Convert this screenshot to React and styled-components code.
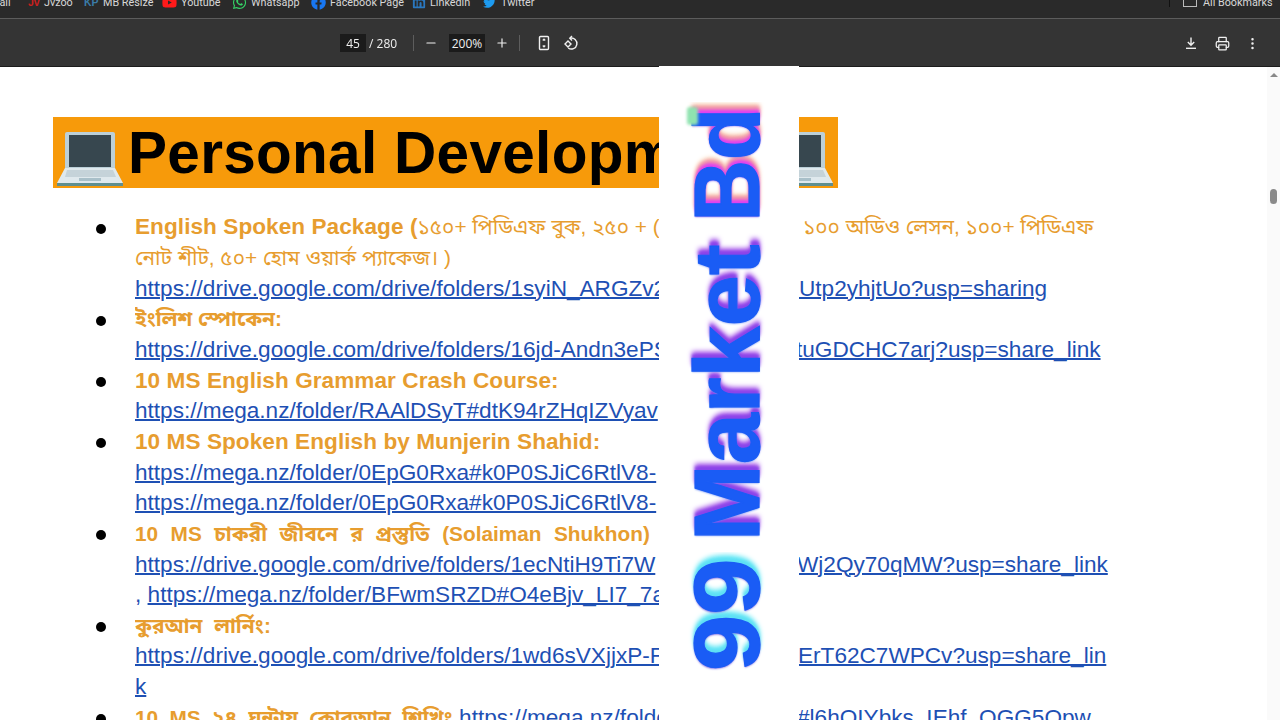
import React from "react";
import styled, { createGlobalStyle } from "styled-components";
import { FaYoutube, FaWhatsapp, FaFacebook, FaLinkedin, FaTwitter } from "react-icons/fa";
import { Minus, Plus, Printer, EllipsisVertical } from "lucide-react";

const Global = createGlobalStyle`
  html, body { margin: 0; padding: 0; background: #fff; overflow: hidden; }
  body { font-family: "Liberation Sans", "Noto Sans", sans-serif; }
`;
const Shell = styled.div`
  position: relative; width: 1280px; height: 720px; overflow: hidden;
  display: flex; flex-direction: column; filter: blur(0.4px);
`;
const BookmarkBar = styled.div`
  height: 19px; flex: none; background: #2a2a2a; display: flex; align-items: flex-start;
  overflow: hidden; color: #d8d8d8; font: 10.8px Roboto, sans-serif;
  border-bottom: 1px solid #5c5c5c; box-sizing: border-box;
`;
const Bookmark = styled.div`
  display: flex; align-items: center; height: 20px; flex: none; margin-top: -8px;
  width: ${p => p.$w}px; white-space: nowrap;
`;
const MailLabel = styled.span` margin-left: -10px; `;
const BmIcon = styled.span`
  display: inline-flex; flex: none; width: ${p => p.$w ?? 19}px; color: ${p => p.$c};
  font: bold 10.5px "Liberation Sans", sans-serif;
`;
const BmSeparator = styled.span`
  width: 1px; height: 9px; background: #111; margin-right: 13px; flex: none;
`;
const FolderBox = styled.span`
  width: 12px; height: 9px; border: 1px solid #bbb; flex: none; display: block; margin-right: 6px; margin-top: -2px;
`;
const Toolbar = styled.div`
  height: 47px; flex: none; background: #343434; display: flex; align-items: center; color: #f0f0f0;
  font: 12px "Open Sans", sans-serif; box-sizing: border-box; padding: 1px 0 0 340px;
  box-shadow: 0 1px 0 #1c1c1c; z-index: 1;
`;
const NumBox = styled.div`
  width: ${p => p.$w}px; height: 18px; background: #1b1b1b; display: flex; align-items: center; justify-content: center;
  flex: none; margin-left: ${p => p.$ml ?? 0}px;
`;
const Total = styled.span` margin-left: 3px; width: 30px; flex: none; white-space: nowrap; `;
const ToolSep = styled.span`
  width: 1px; height: 16px; background: #5d5d5d; flex: none; margin-left: ${p => p.$ml}px;
`;
const ToolIcon = styled.span`
  display: flex; width: 16px; height: 16px; align-items: center; justify-content: center; flex: none;
  margin-left: ${p => p.$ml}px; color: #f0f0f0;
`;
const Page = styled.main`
  flex: 1; background: #fff; padding-top: 51.3px; overflow: hidden; position: relative; min-height: 0;
`;
const Banner = styled.div`
  display: grid; grid-template-columns: 606px 140px 39px; height: 71px; margin-left: 53px; margin-bottom: 24px;
`;
const BannerBand = styled.div`
  background: #f79a0a; display: flex; align-items: center; overflow: hidden; white-space: nowrap; position: relative;
`;
const BannerTitle = styled.h1`
  margin: 0 0 0 75px; font: bold 58.5px/71px "Liberation Sans", sans-serif; color: #000; flex: none; letter-spacing: 0.3px;
`;
const LaptopWrap = styled.span`
  position: absolute; top: 15px; left: ${p => p.$x}px; display: block; line-height: 0;
`;
const Line = styled.div`
  display: grid; grid-template-columns: 135px 524px 140px auto; height: 30.67px; line-height: 30.67px;
  font-size: 22.6px; white-space: nowrap;
`;
const BulletCell = styled.div` display: flex; align-items: center; padding-left: 96px; padding-top: 2px; `;
const Bullet = styled.span` width: 10px; height: 10px; border-radius: 50%; background: #000; display: block; `;
const Cell = styled.div`
  overflow: hidden; color: #1e50b4; text-indent: ${p => p.$indent ?? 0}px;
`;
const Head = styled.span` color: #e79d2f; font-weight: bold; letter-spacing: 0.05px; `;
const Bn = styled.span`
  color: #e79d2f; font-family: "Liberation Sans", "Noto Sans Bengali", "Noto Sans", sans-serif;
  font-weight: ${p => p.$bold ? 700 : 400}; font-size: ${p => p.$fs ?? 20.8}px;
  word-spacing: ${p => p.$ws ?? 0}px;
`;
const Url = styled.span` color: #1e50b4; text-decoration: underline; text-decoration-thickness: 1.5px; `;
const Strip = styled.div`
  position: absolute; left: 659px; top: 66px; bottom: 0; width: 140px; background: #fff;
  display: flex; justify-content: center; z-index: 2;
`;
const Watermark = styled.div`
  writing-mode: vertical-rl; transform: rotate(180deg); height: 565px; margin-top: 39px; margin-left: -5px;
  font: bold 92px/92px "Liberation Sans", sans-serif; color: #1a5cf5; white-space: nowrap;
  display: flex; justify-content: flex-start; width: 92px;
  -webkit-text-stroke: 1.2px #1a5cf5;
`;
const Word = styled.span`
  display: block; flex: none; text-shadow: ${p => p.$shadow};
  margin-inline-start: ${p => p.$ms}px;
  transform: scaleY(${p => p.$stretch});
`;
const Smudge = styled.span`
  position: absolute; left: 28px; top: 41px; width: 11px; height: 18px; border-radius: 3px;
  background: #8fe3b0; filter: blur(1.5px); z-index: 1;
`;
const Track = styled.div`
  position: absolute; right: 0; top: 67px; bottom: 0; width: 13px; background: #fafafa; z-index: 3;
  display: flex; flex-direction: column; align-items: center; padding-top: 6px; box-sizing: border-box;
`;
const Arrow = styled.span`
  width: 0; height: 0; border-left: 4px solid transparent; border-right: 4px solid transparent;
  border-bottom: 4px solid #888; display: block;
`;
const Thumb = styled.span`
  width: 7px; height: 15px; border-radius: 4px; background: #8a8a8a; margin-top: 112px; display: block;
`;

const Laptop = () => (
  <svg width="66" height="54" viewBox="0 0 66 54">
    <path d="M10 0h46a2 2 0 0 1 2 2v36H8V2a2 2 0 0 1 2-2z" fill="#bcd0d8" />
    <rect x="12" y="3" width="42" height="32" fill="#37474f" />
    <path d="M8 36h50l8 15H0z" fill="#dfe9ed" />
    <path d="M10 38h46l3 7H8z" fill="#c5d3d9" />
    <rect x="22" y="46" width="22" height="3" fill="#a9c0c9" />
    <rect x="0" y="51" width="66" height="3" fill="#5e8f8f" />
  </svg>
);
const Fit = () => (
  <svg width="14" height="16" viewBox="0 0 14 16" fill="none" stroke="currentColor" strokeWidth="1.4">
    <rect x="2.5" y="1.5" width="9" height="13" rx="1" />
    <path d="M5.8 5.5 7 4.3l1.2 1.2M5.8 10.5 7 11.7l1.2-1.2" />
  </svg>
);
const Rotate = () => (
  <svg width="16" height="16" viewBox="0 0 16 16" fill="none" stroke="currentColor" strokeWidth="1.4">
    <path d="M6 3.2A5.5 5.5 0 1 1 4.2 13" />
    <path d="M8 1 5.8 3.2 8 5.4" />
    <path d="M4 6 1 9l3 3 3-3z" />
  </svg>
);
const Save = () => (
  <svg width="14" height="14" viewBox="0 0 14 14" fill="none" stroke="currentColor" strokeWidth="1.4">
    <path d="M7 1.5v7.5M3.8 6 7 9.2 10.2 6" />
    <path d="M2 12.3h10" />
  </svg>
);

const rows = [
  { left: <><Head>English Spoken Package (</Head><Bn>১৫০+ পিডিএফ বুক, ২৫০ + (</Bn></>, right: <Bn>১০০ অডিও লেসন, ১০০+ পিডিএফ</Bn>, indent: 4, bullet: true },
  { left: <Bn>নোট শীট, ৫০+ হোম ওয়ার্ক প্যাকেজ। )</Bn> },
  { left: <Url>https://drive.google.com/drive/folders/1syiN_ARGZv2</Url>, right: <Url>Utp2yhjtUo?usp=sharing</Url> },
  { left: <Bn $bold>ইংলিশ স্পোকেন:</Bn>, bullet: true },
  { left: <Url>https://drive.google.com/drive/folders/16jd-Andn3ePS</Url>, right: <Url>tuGDCHC7arj?usp=share_link</Url>, indent: -3 },
  { left: <Head>10 MS English Grammar Crash Course:</Head>, bullet: true },
  { left: <Url>https://mega.nz/folder/RAAlDSyT#dtK94rZHqIZVyav</Url> },
  { left: <Head>10 MS Spoken English by Munjerin Shahid:</Head>, bullet: true },
  { left: <Url>https://mega.nz/folder/0EpG0Rxa#k0P0SJiC6RtlV8-</Url> },
  { left: <Url>https://mega.nz/folder/0EpG0Rxa#k0P0SJiC6RtlV8-</Url> },
  { left: <Bn $bold $ws={6.7}>10 MS চাকরী জীবনে র প্রস্তুতি (Solaiman Shukhon)</Bn>, bullet: true },
  { left: <Url>https://drive.google.com/drive/folders/1ecNtiH9Ti7W</Url>, right: <Url>Wj2Qy70qMW?usp=share_link</Url>, indent: -2 },
  { left: <>, <Url>https://mega.nz/folder/BFwmSRZD#O4eBjv_LI7_7a</Url></> },
  { left: <Bn $bold $ws={6}>কুরআন লার্নিং:</Bn>, bullet: true },
  { left: <Url>https://drive.google.com/drive/folders/1wd6sVXjjxP-F</Url>, right: <Url>ErT62C7WPCv?usp=share_lin</Url>, indent: -1 },
  { left: <Url>k</Url> },
  { left: <><Bn $bold $ws={5.5}>10 MS ২৪ ঘন্টায় কোরআন শিখিং</Bn> <Url>https://mega.nz/folde</Url></>, right: <Url>#l6hQIYbks_IEhf_QGG5Qpw</Url>, indent: -2, bullet: true },
];

const pink = "-1px 0 2px #7a5cf0, 4px 0 3px #e040f0, 8px 0 4px #f08ab0, 10px 0 6px #f7c9a0";
const violet = "-1px 0 2px #6a8cf5, 4px 0 3px #8a44ea, 7px 0 5px #a24fe8";
const cyan = "-1px 0 2px #7060e0, 4px 0 3px #5ee0f5, 7px 0 5px #66e8f5";

export default function App() {
  return (
    <Shell>
      <Global />
      <BookmarkBar>
        <Bookmark $w={28}><MailLabel>Mail</MailLabel></Bookmark>
        <Bookmark $w={56}><BmIcon $c="#c9201e" $w={16}>Jv</BmIcon><span>Jvzoo</span></Bookmark>
        <Bookmark $w={78}><BmIcon $c="#3a7ca8">KP</BmIcon><span>MB Resize</span></Bookmark>
        <Bookmark $w={70}><BmIcon $c="#ff1a1a"><FaYoutube size={15} /></BmIcon><span>Youtube</span></Bookmark>
        <Bookmark $w={79}><BmIcon $c="#35d366"><FaWhatsapp size={15} /></BmIcon><span>Whatsapp</span></Bookmark>
        <Bookmark $w={101}><BmIcon $c="#1877f2"><FaFacebook size={15} /></BmIcon><span>Facebook Page</span></Bookmark>
        <Bookmark $w={71}><BmIcon $c="#2a78c0" $w={18}><FaLinkedin size={14} /></BmIcon><span>Linkedin</span></Bookmark>
        <Bookmark $w={686}><BmIcon $c="#1d9bf0" $w={18}><FaTwitter size={13} /></BmIcon><span>Twitter</span></Bookmark>
        <Bookmark $w={111}><BmSeparator /><FolderBox /><span>All Bookmarks</span></Bookmark>
      </BookmarkBar>
      <Toolbar>
        <NumBox $w={26}>45</NumBox>
        <Total>/ 280</Total>
        <ToolSep $ml={14} />
        <ToolIcon $ml={9}><Minus size={14} /></ToolIcon>
        <NumBox $w={36} $ml={10}>200%</NumBox>
        <ToolIcon $ml={9}><Plus size={14} /></ToolIcon>
        <ToolSep $ml={9} />
        <ToolIcon $ml={16}><Fit /></ToolIcon>
        <ToolIcon $ml={12}><Rotate /></ToolIcon>
        <ToolIcon $ml={603}><Save /></ToolIcon>
        <ToolIcon $ml={15}><Printer size={15} /></ToolIcon>
        <ToolIcon $ml={14}><EllipsisVertical size={15} /></ToolIcon>
      </Toolbar>
      <Page>
        <Banner>
          <BannerBand>
            <LaptopWrap $x={4}><Laptop /></LaptopWrap>
            <BannerTitle>Personal Development</BannerTitle>
          </BannerBand>
          <span />
          <BannerBand>
            <LaptopWrap $x={-32}><Laptop /></LaptopWrap>
          </BannerBand>
        </Banner>
        {rows.map((r, i) => (
          <Line key={i}>
            <BulletCell>{r.bullet && <Bullet />}</BulletCell>
            <Cell>{r.left}</Cell>
            <span />
            <Cell $indent={r.indent}>{r.right}</Cell>
          </Line>
        ))}
      </Page>
      <Strip>
        <Smudge />
        <Watermark>
          <Word $shadow={cyan} $ms={3.5} $stretch={1.1}>99</Word>
          <Word $shadow={violet} $ms={23.5} $stretch={1}>Market</Word>
          <Word $shadow={pink} $ms={17.7} $stretch={0.93}>Bd</Word>
        </Watermark>
      </Strip>
      <Track><Arrow /><Thumb /></Track>
    </Shell>
  );
}
